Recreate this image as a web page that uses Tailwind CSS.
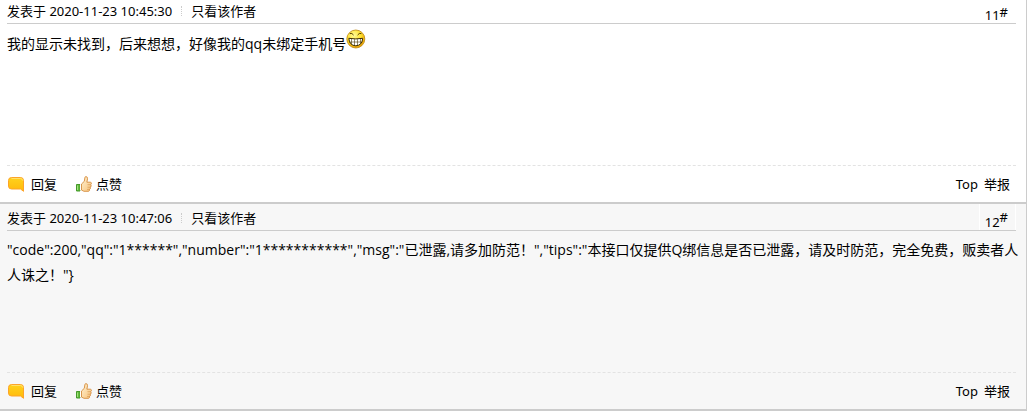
<!DOCTYPE html>
<html lang="zh-CN">
<head>
  <meta charset="utf-8" />
  <meta name="viewport" content="width=device-width, initial-scale=1" />
  <title>帖子回复</title>
  <script src="https://cdn.jsdelivr.net/npm/@tailwindcss/browser@4"></script>
</head>
<body class="bg-white text-black text-[13px] leading-5 font-['Noto_Sans','Noto_Sans_CJK_SC',sans-serif]">

  <!-- Shared icons -->
  <svg class="absolute size-0" aria-hidden="true">
    <defs>
      <linearGradient id="bubbleFill" x1="0" y1="0" x2="0" y2="1">
        <stop offset="0" stop-color="#ffd21c" />
        <stop offset="1" stop-color="#ffb90c" />
      </linearGradient>
      <linearGradient id="handFill" x1="0" y1="0" x2="1" y2="1">
        <stop offset="0" stop-color="#fff3d4" />
        <stop offset="1" stop-color="#f7c27a" />
      </linearGradient>
      <radialGradient id="smileFill" cx=".4" cy=".3" r=".7">
        <stop offset="0" stop-color="#fffa9a" />
        <stop offset=".55" stop-color="#ffe02e" />
        <stop offset="1" stop-color="#e8a000" />
      </radialGradient>
    </defs>
    <symbol id="reply" viewBox="0 0 16 16">
      <path d="M3.500 1.500h9a3 3 0 0 1 3 3v10.800l-3-2.300h-9a3 3 0 0 1-3-3v-5.500a3 3 0 0 1 3-3z" fill="url(#bubbleFill)" stroke="#fda428" />
      <path d="M3.500 2.500h9a2 2 0 0 1 2 2" fill="none" stroke="#ffe16b" />
    </symbol>
    <symbol id="thumb" viewBox="0 0 16 16">
      <path d="M.5 8.500h3.500v6.500h-3.500z" fill="#62bd3c" stroke="#45992b" />
      <path d="M1.500 9.500v4.500" stroke="#a5df80" />
      <path d="M4 8.200h1.500v6h-1.500z" fill="#fff" />
      <path d="M5.500 8 8.300 5.300 8.900 1.600Q9 .6 10 .6q1.700.1 1.500 2.200l-.6 3.400h3.400q1.300.2 1.100 1.400-.1.900-.9 1.100.9.500.6 1.500-.2.800-1 1 .7.600.3 1.400-.3.700-1 .8.400.8-.1 1.400-.4.500-1.200.5H8l-2.500-1.200z" fill="url(#handFill)" stroke="#d58b3c" stroke-width=".9" />
      <path d="M11.500 8.700h3M11.500 11.200h2.800M11 13.400h2.600" stroke="#d9994f" stroke-width=".7" />
    </symbol>
    <symbol id="grin" viewBox="0 0 20 20">
      <circle cx="9.800" cy="10" r="9" fill="url(#smileFill)" stroke="#bd8510" stroke-width=".8" />
      <path d="M3.800 4.600Q6 3.600 7.600 6.100M15.400 4.600Q13 3.600 11.600 6.100" fill="none" stroke="#594000" stroke-width="1" />
      <path d="M2.800 9.300Q9.800 10.600 16.700 9.300 16.200 16.500 9.800 16.800 3.400 16.500 2.800 9.300z" fill="#fff" stroke="#3d2b00" stroke-width="1" />
      <path d="M5.500 10v5.500M8.500 10.200v6.400M11.500 10.200v6.400M14.500 10v5M3 13h13.500" stroke="#4c3a0a" stroke-width=".6" />
    </symbol>
  </svg>

  <main class="border-r border-[#ccc] mr-px">
    <article class="border-b-2 border-[#ccc] pl-[7px] pr-[10px]">
      <header class="flex h-6 items-center justify-between border-b border-[#ccc]">
        <div class="flex items-center pb-px">
          <span>发表于 2020-11-23 10:45:30</span>
          <span class="mx-[9px] h-[10px] border-l border-dotted border-[#ccc]"></span>
          <a href="#">只看该作者</a>
        </div>
        <a href="#" class="flex h-full items-end pr-2"><span class="leading-4">11</span><sup class="top-0 self-center text-[13px] leading-4">#</sup></a>
      </header>
      <div class="-mr-[6px] min-h-[141px] pt-[7px] font-['Open_Sans','Noto_Sans_CJK_SC',sans-serif] text-[14px] leading-[25px]">
        我的显示未找到，后来想想，好像我的qq未绑定手机号<svg class="-mt-3 inline size-5 align-middle" role="img" aria-label="呲牙"><use href="#grin" /></svg>
      </div>
      <footer class="flex h-[37px] items-center justify-between border-t border-dashed border-[#e3e3e3] pr-[6px]">
        <div class="flex gap-[19px]">
          <button class="flex items-center gap-[7px]"><svg class="ml-px size-4"><use href="#reply" /></svg>回复</button>
          <button class="flex items-center gap-1"><svg class="size-4"><use href="#thumb" /></svg>点赞</button>
        </div>
        <nav class="flex gap-[6px]">
          <a href="#">Top</a>
          <a href="#">举报</a>
        </nav>
      </footer>
    </article>

    <article class="border-b-2 border-[#ccc] bg-[#f7f7f7] pl-[7px] pr-[10px]">
      <header class="flex h-[27px] items-center justify-between border-b border-[#ccc]">
        <div class="flex items-center pt-px">
          <span>发表于 2020-11-23 10:47:06</span>
          <span class="mx-[9px] h-[10px] border-l border-dotted border-[#ccc]"></span>
          <a href="#">只看该作者</a>
        </div>
        <a href="#" class="flex h-full items-end border-x border-white pr-[7px] pl-[5px]"><span class="leading-4">12</span><sup class="top-0 self-center text-[13px] leading-4">#</sup></a>
      </header>
      <div class="-mr-[6px] min-h-[141px] pt-[6px] font-['Open_Sans','Noto_Sans_CJK_SC',sans-serif] text-[14px] leading-[25px]">
        "code":200,"qq":"1******","number":"1***********","msg":"已泄露,请多加防范！","tips":"本接口仅提供Q绑信息是否已泄露，请及时防范，完全免费，贩卖者人人诛之！"}
      </div>
      <footer class="flex h-[37px] items-center justify-between border-t border-dashed border-[#e3e3e3] pr-[6px]">
        <div class="flex gap-[19px]">
          <button class="flex items-center gap-[7px]"><svg class="ml-px size-4"><use href="#reply" /></svg>回复</button>
          <button class="flex items-center gap-1"><svg class="size-4"><use href="#thumb" /></svg>点赞</button>
        </div>
        <nav class="flex gap-[6px]">
          <a href="#">Top</a>
          <a href="#">举报</a>
        </nav>
      </footer>
    </article>
  </main>

</body>
</html>
